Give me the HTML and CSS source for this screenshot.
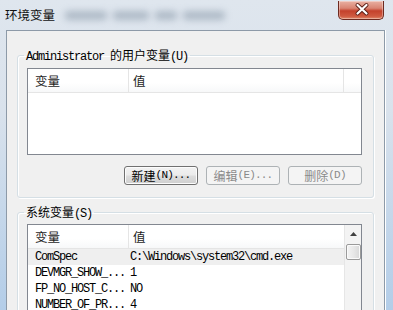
FILE: index.html
```html
<!DOCTYPE html>
<html lang="zh-CN">
<head>
<meta charset="utf-8">
<title>环境变量</title>
<link rel="stylesheet" href="styles.css">
</head>
<body>
<div class="window">
  <div class="titlebar">
    <span class="title">环境变量</span>
    <div class="blur" aria-hidden="true"><i class="b1"></i><i class="b2"></i><i class="b3"></i><i class="b4"></i></div>
    <div class="close">
      <svg width="46" height="19" viewBox="0 0 46 19">
        <path d="M18.5 5 L27.5 13.5 M27.5 5 L18.5 13.5" stroke="#5a1e16" stroke-width="4" stroke-linecap="round"/>
        <path d="M18.5 5 L27.5 13.5 M27.5 5 L18.5 13.5" stroke="#ffffff" stroke-width="2.2" stroke-linecap="round"/>
      </svg>
    </div>
  </div>
  <div class="client">
    <fieldset class="group g1">
      <legend><span class="m">Administrator </span><span class="c">的用户变量</span><span class="m">(U)</span></legend>
      <div class="list l1">
        <div class="lv-main">
          <div class="head">
            <div class="hc h1"><span class="c">变量</span></div>
            <div class="hc h2"><span class="c">值</span></div>
            <div class="hc h3"></div>
          </div>
        </div>
      </div>
      <div class="buttons">
        <div class="btn"><span class="c">新建</span><span class="m">(N)...</span></div>
        <div class="btn dis"><span class="c">编辑</span><span class="m">(E)...</span></div>
        <div class="btn dis"><span class="c">删除</span><span class="m">(D)</span></div>
      </div>
    </fieldset>
    <fieldset class="group g2">
      <legend><span class="c">系统变量</span><span class="m">(S)</span></legend>
      <div class="list l2">
        <div class="lv-main">
          <div class="head">
            <div class="hc h1"><span class="c">变量</span></div>
            <div class="hc h2"><span class="c">值</span></div>
          </div>
          <div class="row sel"><div class="k">ComSpec</div><div class="v">C:\Windows\system32\cmd.exe</div></div>
          <div class="row"><div class="k">DEVMGR_SHOW_...</div><div class="v">1</div></div>
          <div class="row"><div class="k">FP_NO_HOST_C...</div><div class="v">NO</div></div>
          <div class="row"><div class="k">NUMBER_OF_PR...</div><div class="v">4</div></div>
        </div>
        <div class="scrollbar">
          <div class="arrow"><svg width="7" height="4" viewBox="0 0 7 4"><path d="M0 4 L3.5 0 L7 4 Z" fill="#404040"/></svg></div>
          <div class="thumb"></div>
        </div>
      </div>
    </fieldset>
  </div>
</div>
</body>
</html>
```
FILE: styles.css
```css
html, body {
  margin: 0;
  padding: 0;
}
body {
  width: 393px;
  height: 310px;
  overflow: hidden;
  background: #dfe6ee;
}
.window {
  width: 393px;
  height: 310px;
  display: flex;
  flex-direction: column;
  background: linear-gradient(180deg, #dfe6ee 0px, #d9e2ec 110px, #b3cde8 310px);
}
.c {
  font-family: "Noto Sans CJK SC", sans-serif;
  font-size: 12px;
  letter-spacing: 0;
}
.m {
  font-family: "Liberation Mono", monospace;
  font-size: 12px;
  letter-spacing: -1.2px;
}
.titlebar {
  height: 30px;
  flex: none;
  display: flex;
  align-items: flex-start;
  position: relative;
}
.title {
  font-family: "Noto Sans CJK SC", sans-serif;
  font-size: 12.5px;
  line-height: 16px;
  color: #111;
  padding: 7px 0 0 5px;
}
.blur {
  display: flex;
  align-items: center;
  gap: 6px;
  margin: 9px 0 0 10px;
  height: 12px;
  filter: blur(3.5px);
  opacity: 0.5;
}
.blur i {
  display: block;
  height: 9px;
  background: #7f8fa0;
  border-radius: 3px;
}
.b1 { width: 42px; }
.b2 { width: 36px; }
.b3 { width: 22px; }
.b4 { width: 42px; }
.close {
  margin: 1px 9px 0 auto;
  width: 46px;
  height: 19px;
  box-sizing: border-box;
  border: 1px solid #6d2a20;
  border-top: none;
  border-radius: 0 0 5px 5px;
  background: linear-gradient(180deg, #e9b1a3 0%, #d98472 40%, #c4412c 55%, #cf5a40 85%, #e08a6c 100%);
  box-shadow: inset 0 0 0 1px rgba(255, 255, 255, 0.35);
}
.close svg {
  display: block;
  margin-top: -1px;
}
.client {
  flex: 1;
  margin: 0 8px 0 6px;
  border: 1px solid #8d9aa8;
  border-bottom: none;
  background: #f0f0f0;
  padding: 0 10px;
  overflow: hidden;
  box-shadow: 1px 0 0 #ffffff;
}
.group {
  margin: 0;
  border: 1px solid #d5dfe5;
  border-radius: 3px;
  box-shadow: inset 1px 1px 0 #ffffff, 1px 1px 0 #ffffff;
  min-width: 0;
}
.group legend {
  padding: 0 2px;
  margin-left: -3px;
  line-height: 14px;
  height: 14px;
  color: #000;
  white-space: nowrap;
}
.group legend .c, .group legend .m {
  line-height: 14px;
}
.g1 {
  margin-top: 17px;
  padding: 0 11px 12px 9px;
}
.g2 {
  margin-top: 7px;
  padding: 0 11px 0 9px;
}
.list {
  border: 1px solid #828790;
  background: #ffffff;
  display: flex;
}
.l1 {
  margin-top: 6px;
  height: 87px;
  box-sizing: border-box;
}
.l2 {
  margin-top: 5px;
  height: 130px;
  box-sizing: border-box;
}
.lv-main {
  flex: 1;
  min-width: 0;
}
.head {
  display: flex;
  height: 23px;
  border-bottom: 1px solid #e5e5e5;
  background: linear-gradient(180deg, #ffffff 0%, #ffffff 60%, #f7f8f9 100%);
  color: #1e1e1e;
}
.hc {
  display: flex;
  align-items: center;
  box-sizing: border-box;
}
.hc .c {
  font-size: 12.5px;
  line-height: 16px;
}
.h1 {
  width: 101px;
  padding-left: 7px;
  border-right: 1px solid #e5e5e5;
}
.h2 {
  flex: 1;
  padding-left: 4px;
}
.l1 .h2 {
  flex: none;
  width: 215px;
  border-right: 1px solid #e5e5e5;
}
.l1 .h3 {
  flex: 1;
}
.buttons {
  display: flex;
  justify-content: flex-end;
  gap: 8px;
  margin-top: 11px;
}
.btn {
  width: 74px;
  height: 19px;
  box-sizing: border-box;
  border: 1px solid #707070;
  border-radius: 3px;
  background: linear-gradient(180deg, #f2f2f2 0%, #ebebeb 48%, #dddddd 52%, #cfcfcf 100%);
  box-shadow: inset 0 0 0 1px #fcfcfc;
  display: flex;
  align-items: center;
  justify-content: center;
  color: #000;
}
.btn .c, .btn .m {
  line-height: 15px;
}
.btn .m {
  font-size: 11px;
  letter-spacing: -0.8px;
}
.btn.dis {
  border-color: #adb2b5;
  background: #f4f4f4;
  color: #8a8a8a;
  box-shadow: none;
}
.row {
  display: flex;
  height: 16px;
  align-items: center;
  font-family: "Liberation Mono", monospace;
  font-size: 12px;
  letter-spacing: -1.2px;
  color: #000;
  white-space: nowrap;
}
.row.sel {
  background: #efefef;
}
.k {
  width: 101px;
  padding-left: 7px;
  box-sizing: border-box;
  flex: none;
}
.v {
  padding-left: 1px;
}
.scrollbar {
  width: 17px;
  flex: none;
  background: #f3f3f3;
  border-left: 1px solid #e6e6e6;
  box-sizing: border-box;
  display: flex;
  flex-direction: column;
  align-items: center;
}
.arrow {
  height: 17px;
  display: flex;
  align-items: center;
  justify-content: center;
}
.arrow svg {
  display: block;
}
.thumb {
  margin-top: 2px;
  width: 15px;
  height: 16px;
  box-sizing: border-box;
  border: 1px solid #9a9a9a;
  border-radius: 2px;
  background: linear-gradient(90deg, #f3f3f3 0%, #e8e8e8 50%, #d8d8d8 100%);
  box-shadow: inset 0 0 0 1px #fafafa;
}
```
